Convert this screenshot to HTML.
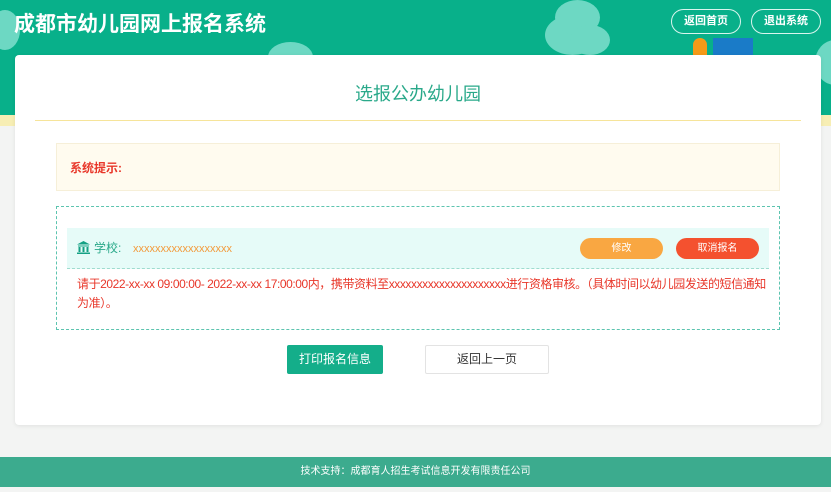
<!DOCTYPE html>
<html><head><meta charset="utf-8"><style>
*{margin:0;padding:0;box-sizing:border-box}
body{width:831px;height:492px;overflow:hidden;background:#f3f4f3;font-family:"Liberation Sans","Noto Sans CJK SC",sans-serif;position:relative}
.hdr{position:absolute;left:0;top:0;width:831px;height:115px;background:#08b08a}
.band{position:absolute;left:0;top:115px;width:831px;height:11px;background:#f7eeb4}
.cloud{position:absolute;background:#6dd8c3;border-radius:50%}
.title{position:absolute;left:14px;top:8px;color:#fff;font-size:21px;font-weight:bold}
.hb{position:absolute;top:9px;height:25px;border:1px solid #d9f5ee;border-radius:13px;color:#fff;font-size:11px;font-weight:bold;text-align:center;line-height:23px}
.card{position:absolute;left:15px;top:55px;width:806px;height:370px;background:#fff;border-radius:4px;box-shadow:0 1px 4px rgba(0,0,0,.08)}
.ab{position:absolute}
.foot{position:absolute;left:0;top:457px;width:831px;height:30px;background:#3cab8e;color:#fff;font-size:10px;text-align:center;line-height:30px}
</style></head><body>
<div class="hdr"></div>
<div class="cloud" style="left:-10px;top:10px;width:30px;height:40px"></div>
<div class="cloud" style="left:268px;top:42px;width:45px;height:30px"></div>
<div class="cloud" style="left:545px;top:15px;width:55px;height:40px"></div>
<div class="cloud" style="left:555px;top:0px;width:45px;height:35px"></div>
<div class="cloud" style="left:570px;top:25px;width:40px;height:30px"></div>
<div class="cloud" style="left:815px;top:40px;width:40px;height:45px"></div>
<div class="ab" style="left:693px;top:38px;width:14px;height:17px;background:#f49a18;border-radius:7px 7px 0 0"></div>
<div class="ab" style="left:713px;top:38px;width:40px;height:17px;background:#1a7bc8"></div>
<div class="band"></div>
<div class="title">成都市幼儿园网上报名系统</div>
<div class="hb" style="left:671px;width:70px">返回首页</div>
<div class="hb" style="left:751px;width:70px">退出系统</div>
<div class="card"></div>
<div class="ab" style="left:15px;top:80px;width:806px;text-align:center;color:#2aa98a;font-size:18px">选报公办幼儿园</div>
<div class="ab" style="left:35px;top:120px;width:766px;height:1px;background:#f6e49a"></div>
<div class="ab" style="left:56px;top:143px;width:724px;height:48px;background:#fffbef;border:1px solid #f6efd8"></div>
<div class="ab" style="left:70px;top:159px;color:#e8372a;font-size:12px;font-weight:bold">系统提示:</div>
<div class="ab" style="left:56px;top:206px;width:724px;height:124px;border:1px dashed #5cc4af"></div>
<div class="ab" style="left:67px;top:228px;width:702px;height:41px;background:#e6fbf8;border-bottom:1px dashed #9fdccf"></div>
<svg class="ab" style="left:77px;top:241px" width="13" height="13" viewBox="0 0 13 13"><path d="M6.5 0L0 3.5h13z M1 4.5h11v1H1z M1.5 6h2v5h-2z M5.5 6h2v5h-2z M9.5 6h2v5h-2z M0 11.5h13V13H0z" fill="#14a084"/></svg>
<div class="ab" style="left:94px;top:240px;color:#2aa98a;font-size:12px;line-height:16px">学校:</div>
<div class="ab" style="left:133px;top:241px;color:#f39a3b;font-size:11px;line-height:16px">xxxxxxxxxxxxxxxxxx</div>
<div class="ab" style="left:580px;top:238px;width:83px;height:21px;background:#f9a742;border-radius:11px;color:#fff;font-size:10px;text-align:center;line-height:21px">修改</div>
<div class="ab" style="left:676px;top:238px;width:83px;height:21px;background:#f4512f;border-radius:11px;color:#fff;font-size:10px;text-align:center;line-height:21px">取消报名</div>
<div class="ab" style="left:77px;top:275px;color:#e8372a;font-size:12px;line-height:19px;letter-spacing:-0.43px;white-space:nowrap">请于2022-xx-xx 09:00:00- 2022-xx-xx 17:00:00内，携带资料至xxxxxxxxxxxxxxxxxxxxx进行资格审核。（具体时间以幼儿园发送的短信通知<br>为准）。</div>
<div class="ab" style="left:287px;top:345px;width:96px;height:29px;background:#14ae8a;border-radius:2px;color:#fff;font-size:12px;text-align:center;line-height:29px">打印报名信息</div>
<div class="ab" style="left:425px;top:345px;width:124px;height:29px;background:#fff;border:1px solid #e3e3e3;border-radius:2px;color:#333;font-size:12px;text-align:center;line-height:27px">返回上一页</div>
<div class="foot">技术支持：成都育人招生考试信息开发有限责任公司</div>
</body></html>
